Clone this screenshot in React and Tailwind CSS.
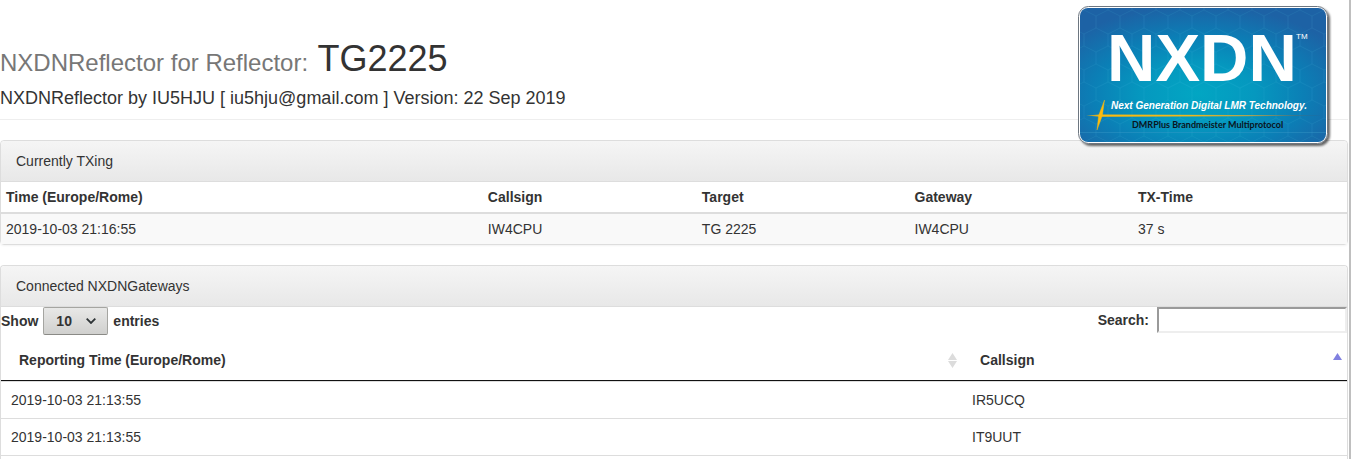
import React from "react";

const HEXES = [];
for (let row = 0; row < 9; row++) {
  for (let col = 0; col < 12; col++) {
    HEXES.push([col * 24 + (row % 2) * 12 - 6, row * 18 - 2]);
  }
}

function Logo() {
  return (
    <svg viewBox="0 0 258 146" className="block h-[146px] w-[258px]" role="img" aria-label="NXDN">
      <defs>
        <radialGradient id="glow" cx="0.48" cy="0.64" r="0.66">
          <stop offset="0" stopColor="#02a6c3" />
          <stop offset="0.35" stopColor="#0598bf" />
          <stop offset="0.65" stopColor="#0b7fb6" />
          <stop offset="1" stopColor="#1d62a5" />
        </radialGradient>
        <linearGradient id="beam" gradientUnits="userSpaceOnUse" x1="8" x2="242" y1="0" y2="0">
          <stop offset="0" stopColor="#f5b50f" stopOpacity="0.5" />
          <stop offset="0.06" stopColor="#fdbb0c" />
          <stop offset="0.45" stopColor="#f0b81c" />
          <stop offset="0.7" stopColor="#a8a455" />
          <stop offset="0.9" stopColor="#3f7484" />
          <stop offset="1" stopColor="#22659a" stopOpacity="0.4" />
        </linearGradient>
        <filter id="shade" x="-5%" y="-5%" width="112%" height="115%">
          <feDropShadow dx="2" dy="2" stdDeviation="1.3" floodColor="#000" floodOpacity="0.6" />
        </filter>
        <clipPath id="card">
          <rect x="2" y="2" width="246" height="134" rx="8" />
        </clipPath>
      </defs>
      <rect x="0.5" y="0.5" width="249" height="137" rx="10" fill="#fff" stroke="#6d7680" filter="url(#shade)" />
      <g clipPath="url(#card)">
        <rect x="2" y="2" width="246" height="134" fill="url(#glow)" />
        <g fill="none" stroke="#5fd0e6" strokeOpacity="0.06">
          {HEXES.map(([x, y]) => (
            <path key={`${x}-${y}`} d={`M${x} ${y - 12}l12 6v12l-12 6l-12-6v-12z`} />
          ))}
        </g>
        <path d="M2 126.500H248" stroke="#3d9cc8" strokeOpacity="0.4" />
      </g>
      <g fontFamily="'Liberation Sans', Arial, sans-serif" fill="#fff">
        <text x="29" y="75" fontSize="67" fontWeight="700">NXDN</text>
        <text x="218" y="33" fontSize="8">TM</text>
        <text x="33" y="103" fontSize="10" fontWeight="700" fontStyle="italic">Next Generation Digital LMR Technology.</text>
      </g>
      <path d="M8 109.500L22 108.400L160 109L242 109.300V109.800L160 110.200L22 110.800z" fill="url(#beam)" />
      <path d="M26.500 94L24.400 109.500L19 124L20.600 109.500z" fill="#fdbb0c" stroke="#fdbb0c" strokeWidth="0.4" />
      <text x="54" y="122" fontSize="9" fontWeight="700" fontFamily="Lato, 'Open Sans', sans-serif" fill="#0a1420">
        DMRPlus Brandmeister Multiprotocol
      </text>
    </svg>
  );
}

function Panel({ title, className, children }) {
  return (
    <section className={`rounded-t border border-[#ddd] ${className}`}>
      <h2 className="rounded-t border-b border-[#ddd] bg-linear-to-b from-[#f5f5f5] to-[#e8e8e8] px-[15px] py-2.5">
        {title}
      </h2>
      {children}
    </section>
  );
}

const GATEWAYS = [
  ["2019-10-03 21:13:55", "IR5UCQ"],
  ["2019-10-03 21:13:55", "IT9UUT"],
];

export default function App() {
  return (
    <div className="flex min-h-screen flex-col border-r-2 border-[#bfbfbf] bg-white pr-px font-['Liberation_Sans',Arial,sans-serif] text-[14px] leading-5 text-[#333]">
      <header className="relative mb-5 border-b border-[#eee] pt-[39px] pb-2.5">
        <h1 className="mb-[9px] text-[36px] leading-10">
          <small className="text-[24px] leading-none text-[#777]">NXDNReflector for Reflector:</small> TG2225
        </h1>
        <p className="text-[18px] leading-[21px]">NXDNReflector by IU5HJU [ iu5hju@gmail.com ] Version: 22 Sep 2019</p>
        <div className="absolute top-1.5 right-3">
          <Logo />
        </div>
      </header>

      <Panel title="Currently TXing" className="mb-5 rounded-b shadow-xs">
        <table className="w-full table-fixed text-left">
          <thead>
            <tr className="border-b-2 border-[#ddd]">
              <th className="w-[35.8%] p-[5px]">Time (Europe/Rome)</th>
              <th className="w-[15.9%] p-[5px]">Callsign</th>
              <th className="w-[15.8%] p-[5px]">Target</th>
              <th className="w-[16.6%] p-[5px]">Gateway</th>
              <th className="p-[5px]">TX-Time</th>
            </tr>
          </thead>
          <tbody>
            <tr className="bg-[#f9f9f9]">
              <td className="p-[5px]">2019-10-03 21:16:55</td>
              <td className="p-[5px]">IW4CPU</td>
              <td className="p-[5px]">TG 2225</td>
              <td className="p-[5px]">IW4CPU</td>
              <td className="p-[5px]">37 s</td>
            </tr>
          </tbody>
        </table>
      </Panel>

      <Panel title="Connected NXDNGateways" className="flex-1 border-b-0">
        <div className="flex items-start justify-between font-bold">
          <label className="flex items-center gap-[5px]">
            Show
            <span className="relative">
              <select className="block h-7 w-[65px] appearance-none rounded-xs border border-[#a5a5a1] border-b-[#8a8a86] bg-linear-to-b from-[#e8e8e7] to-[#d0d0ce] pl-3 font-bold">
                <option>10</option>
                <option>25</option>
                <option>50</option>
                <option>100</option>
              </select>
              <svg viewBox="0 0 10 6" className="pointer-events-none absolute top-[11px] right-3 h-1.5 w-2.5" fill="none" stroke="#2e3436" strokeWidth="1.8">
                <path d="M0.700 0.700L5 5L9.300 0.700" />
              </svg>
            </span>
            entries
          </label>
          <label className="flex items-center gap-2">
            Search:
            <input type="search" className="h-[26px] w-[190px] appearance-none border-2 border-t-[#9a9a9a] border-r-[#eee] border-b-[#eee] border-l-[#9a9a9a] bg-white px-1 font-normal outline-none" />
          </label>
        </div>
        <table className="w-full table-fixed border-separate border-spacing-0 border-b border-[#ddd] text-left">
          <thead>
            <tr>
              <th className="w-[71.4%] border-b border-[#111] px-[18px] pt-[15px] pb-2.5">
                <span className="relative block">
                  Reporting Time (Europe/Rome)
                  <svg viewBox="0 0 9 15" className="absolute top-[3px] -right-[13px] h-[15px] w-[9px]" fill="#dcdcdc">
                    <path d="M4.500 0L9 7H0zM0 8H9L4.500 15z" />
                  </svg>
                </span>
              </th>
              <th className="border-b border-[#111] px-[18px] pt-[15px] pb-2.5">
                <span className="relative block">
                  Callsign
                  <svg viewBox="0 0 9 7" className="absolute top-[3px] -right-[13px] h-[7px] w-[9px]" fill="#8080e0">
                    <path d="M4.500 0L9 7H0z" />
                  </svg>
                </span>
              </th>
            </tr>
          </thead>
          <tbody>
            {GATEWAYS.map(([time, call]) => (
              <tr key={call}>
                <td className="border-t border-[#ddd] px-2.5 py-2">{time}</td>
                <td className="border-t border-[#ddd] px-2.5 py-2">{call}</td>
              </tr>
            ))}
          </tbody>
        </table>
      </Panel>
    </div>
  );
}
